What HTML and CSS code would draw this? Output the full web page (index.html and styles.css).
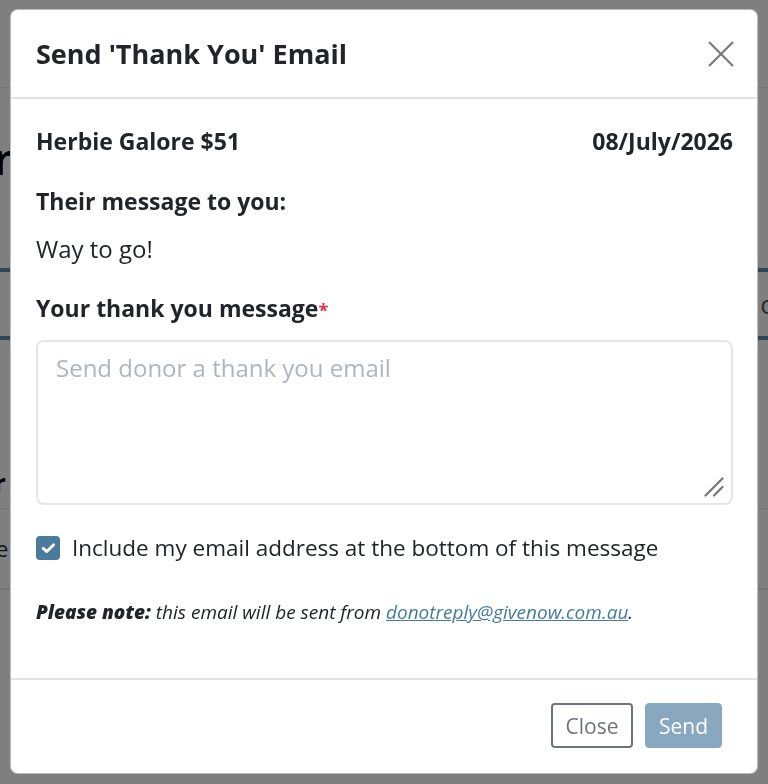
FILE: index.html
```html
<!DOCTYPE html>
<html lang="en">
<head>
<meta charset="utf-8">
<title>Send 'Thank You' Email</title>
<link rel="stylesheet" href="styles.css">
</head>
<body>
<div class="page">
  <div class="page-topbar"></div>
  <div class="page-heading">r</div>
  <div class="page-tabs">
    <div class="tab-line"></div>
    <div class="tab-row"><span class="tab-right">o</span></div>
    <div class="tab-line"></div>
  </div>
  <div class="page-table">
    <div class="th">r</div>
    <div class="td">e</div>
    <div class="td"></div>
  </div>
</div>

<div class="backdrop"></div>

<div class="modal" role="dialog" aria-labelledby="modal-title">
  <div class="modal-header">
    <h2 id="modal-title" class="modal-title">Send 'Thank You' Email</h2>
    <button class="btn-x" aria-label="Close">
      <svg width="28" height="28" viewBox="0 0 28 28"><path d="M2 2 L26 26 M26 2 L2 26" stroke="#7a7a7a" stroke-width="2.2" fill="none"/></svg>
    </button>
  </div>
  <div class="modal-body">
    <div class="donor-row">
      <span>Herbie Galore $51</span>
      <span>08/July/2026</span>
    </div>
    <div class="label">Their message to you:</div>
    <div class="their-msg">Way to go!</div>
    <div class="label label-input">Your thank you message<span class="req">*</span></div>
    <div class="input-wrap">
      <textarea class="msg-input" placeholder="Send donor a thank you email"></textarea>
      <svg class="grip" width="20" height="20" viewBox="0 0 20 20"><path d="M18.5 1.5 L1.5 18.5 M18.5 10 L10 18.5" stroke="#757575" stroke-width="2.2" stroke-linecap="round" fill="none"/></svg>
    </div>
    <label class="check-row">
      <span class="checkbox">
        <svg width="15" height="12" viewBox="0 0 15 12"><path d="M2.2 6.4 L5.8 9.6 L12.6 2.8" stroke="#fff" stroke-width="2.8" fill="none" stroke-linecap="round" stroke-linejoin="round"/></svg>
      </span>
      <span>Include my email address at the bottom of this message</span>
    </label>
    <p class="note"><strong>Please note:</strong> this email will be sent from <a href="#">donotreply@givenow.com.au</a>.</p>
  </div>
  <div class="modal-footer">
    <button class="btn btn-close">Close</button>
    <button class="btn btn-send" disabled>Send</button>
  </div>
</div>
</body>
</html>
```

FILE: styles.css
```css
html, body {
  margin: 0;
  padding: 0;
}
body {
  width: 768px;
  height: 784px;
  overflow: hidden;
  background: #ffffff;
  font-family: "Open Sans", "Noto Sans", sans-serif;
  color: #212529;
}

/* underlying page */
.page {
  display: flex;
  flex-direction: column;
}
.page-topbar {
  height: 87px;
  border-bottom: 1px solid #e6e6e6;
}
.page-heading {
  height: 160px;
  font-size: 44px;
  font-weight: 600;
  color: #000;
  padding-top: 40px;
  box-sizing: border-box;
  margin-left: -6px;
  line-height: 60px;
}
.page-tabs {
  display: flex;
  flex-direction: column;
}
.tab-line {
  height: 4px;
  background: #5d8aa8;
  margin-top: 20px;
}
.tab-row {
  height: 64px;
  display: flex;
  justify-content: flex-end;
  align-items: center;
  font-size: 26px;
  color: #555;
}
.tab-row + .tab-line { margin-top: 0; }
.tab-right {
  margin-right: -8px;
}
.page-table {
  margin-top: 118px;
  display: flex;
  flex-direction: column;
}
.th {
  font-size: 26px;
  font-weight: 700;
  line-height: 50px;
  margin-left: -6px;
  color: #000;
  border-bottom: 1px solid #e6e6e6;
}
.td {
  font-size: 22px;
  line-height: 79px;
  margin-left: -4px;
  color: #222;
  border-bottom: 1px solid #e6e6e6;
}

.backdrop {
  position: fixed;
  inset: 0;
  background: rgba(0, 0, 0, 0.5);
}

/* modal */
.modal {
  position: fixed;
  left: 10px;
  top: 9px;
  width: 748px;
  height: 765px;
  box-sizing: border-box;
  background: #fff;
  border: 1px solid rgba(0, 0, 0, 0.25);
  border-radius: 8px;
  display: flex;
  flex-direction: column;
  overflow: hidden;
}
.modal-header {
  height: 89px;
  box-sizing: border-box;
  display: flex;
  align-items: center;
  justify-content: space-between;
  padding: 0 22px 0 25px;
  border-bottom: 2px solid #dee2e6;
}
.modal-title {
  margin: 0;
  font-size: 27px;
  font-weight: 700;
  line-height: 36px;
  color: #212529;
}
.btn-x {
  background: none;
  border: 0;
  padding: 0;
  width: 28px;
  height: 28px;
  display: flex;
}
.modal-body {
  flex: 1;
  padding: 27px 24px 0 25px;
  display: flex;
  flex-direction: column;
  font-size: 22.5px;
  line-height: 30px;
}
.donor-row {
  display: flex;
  justify-content: space-between;
  font-weight: 700;
  font-size: 23px;
}
.label {
  font-weight: 700;
  font-size: 23px;
  margin-top: 30px;
}
.label-input {
  margin-top: 29px;
}
.their-msg {
  margin-top: 18px;
  font-size: 24px;
}
.req {
  color: #dc3545;
  font-size: 18px;
}
.input-wrap {
  position: relative;
  margin-top: 15px;
  display: flex;
}
.msg-input {
  flex: 1;
  height: 165px;
  box-sizing: border-box;
  border: 2px solid #e3e6ea;
  border-radius: 8px;
  padding: 11px 18px;
  font-family: inherit;
  font-size: 24px;
  line-height: 30px;
  color: #212529;
  resize: none;
  outline: none;
}
.msg-input::placeholder {
  color: #adb5bd;
}
.grip {
  position: absolute;
  right: 9px;
  bottom: 8px;
  pointer-events: none;
}
.check-row {
  margin-top: 28px;
  display: flex;
  align-items: center;
  gap: 12px;
}
.checkbox {
  width: 24px;
  height: 24px;
  flex: none;
  border-radius: 4px;
  background: #4a7a9c;
  display: flex;
  align-items: center;
  justify-content: center;
}
.note {
  margin: 37px 0 0;
  font-size: 19px;
  line-height: 24px;
  font-style: italic;
}
.note strong {
  font-weight: 800;
}
.note a {
  color: #457b9d;
}
.modal-footer {
  height: 95px;
  box-sizing: border-box;
  border-top: 2px solid #dee2e6;
  display: flex;
  justify-content: flex-end;
  align-items: center;
  gap: 12px;
  padding: 0 35px 2px 24px;
}
.btn {
  font-family: inherit;
  font-size: 21px;
  height: 45px;
  border-radius: 4px;
  padding: 0;
  line-height: 30px;
}
.btn-close {
  background: #fff;
  color: #6c757d;
  border: 2px solid #6c757d;
  width: 82px;
}
.btn-send {
  background: #87a8bf;
  color: #fff;
  border: 1px solid #87a8bf;
  width: 77px;
}
```
